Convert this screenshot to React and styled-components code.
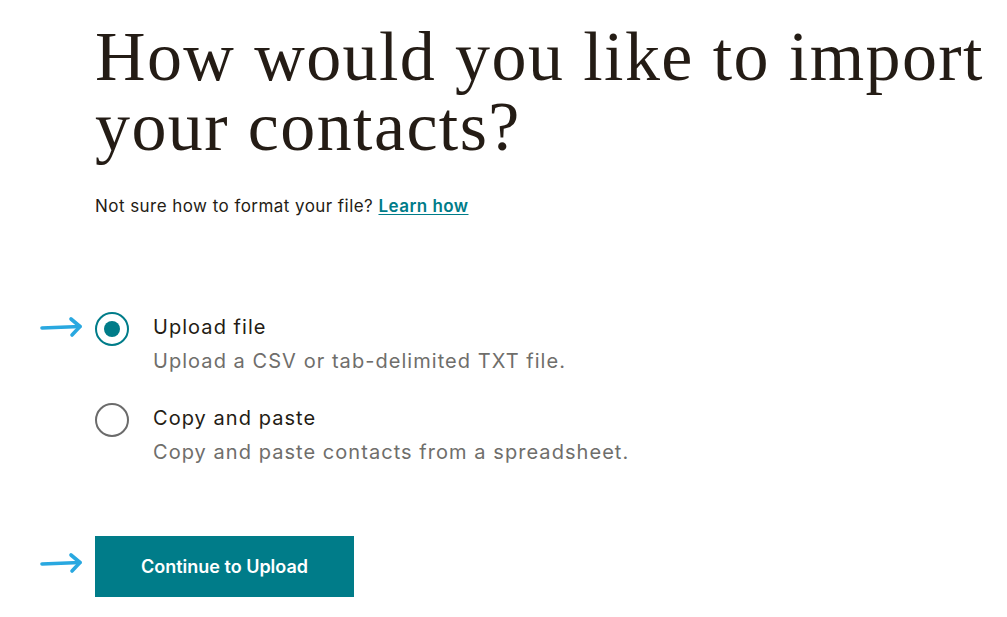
import React, { useState } from 'react';
import styled, { createGlobalStyle } from 'styled-components';

const GlobalStyle = createGlobalStyle`
  html, body {
    margin: 0;
    padding: 0;
    background: #ffffff;
  }
  body {
    font-family: Inter, "Liberation Sans", Arial, sans-serif;
    color: #241c15;
  }
`;

const Page = styled.div`
  width: 1007px;
  height: 617px;
  box-sizing: border-box;
  padding: 22px 0 0 95px;
  overflow: hidden;
`;

const Heading = styled.h1`
  margin: 0;
  font-family: "Liberation Serif", "Times New Roman", serif;
  font-weight: 400;
  font-size: 70px;
  line-height: 70px;
  color: #241c15;
  letter-spacing: 1.4px;
  white-space: nowrap;
`;

const Hint = styled.p`
  margin: 33px 0 0;
  font-size: 17px;
  line-height: 22px;
  letter-spacing: 0.45px;
  color: #241c15;
`;

const Link = styled.a`
  color: #007c89;
  font-weight: 600;
  text-decoration: underline;
  text-underline-offset: 2px;
  cursor: pointer;
`;

const Options = styled.div`
  margin-top: 95px;
  display: flex;
  flex-direction: column;
  gap: 29px;
`;

const Option = styled.label`
  position: relative;
  display: flex;
  align-items: flex-start;
  gap: 24px;
  cursor: pointer;
`;

const Radio = styled.span`
  flex: none;
  width: 34px;
  height: 34px;
  box-sizing: border-box;
  border-radius: 50%;
  border: 2px solid ${p => (p.$checked ? '#007c89' : '#6b6b6b')};
  display: flex;
  align-items: center;
  justify-content: center;
  &::after {
    content: '';
    width: 16px;
    height: 16px;
    border-radius: 50%;
    background: #007c89;
    display: ${p => (p.$checked ? 'block' : 'none')};
  }
`;

const OptionText = styled.div`
  display: flex;
  flex-direction: column;
  gap: 8px;
  padding-top: 2px;
`;

const OptionTitle = styled.span`
  font-size: 20px;
  line-height: 26px;
  letter-spacing: 1.05px;
  color: #241c15;
`;

const OptionDesc = styled.span`
  font-size: 20px;
  line-height: 26px;
  letter-spacing: 1.05px;
  color: #6f6e6b;
`;

const Arrow = styled.svg`
  position: absolute;
  left: -56px;
  top: ${p => p.$top || 8}px;
`;

const ButtonRow = styled.div`
  position: relative;
  margin-top: 71px;
`;

const Button = styled.button`
  width: 259px;
  height: 61px;
  border: none;
  background: #007c89;
  color: #ffffff;
  font-family: Inter, "Liberation Sans", Arial, sans-serif;
  font-size: 18px;
  font-weight: 600;
  letter-spacing: 0;
  cursor: pointer;
`;

const BlueArrow = ({ top }) => (
  <Arrow $top={top} width="46" height="22" viewBox="0 0 46 22" fill="none">
    <path d="M3 12 C15 11.5 28 11 41 10.5" stroke="#29a8e0" strokeWidth="3.6" strokeLinecap="round" />
    <path d="M32 3 L41 10.5 L33 19" stroke="#29a8e0" strokeWidth="3.6" strokeLinecap="round" strokeLinejoin="round" />
  </Arrow>
);

const options = [
  { id: 'upload', title: 'Upload file', desc: 'Upload a CSV or tab-delimited TXT file.' },
  { id: 'paste', title: 'Copy and paste', desc: 'Copy and paste contacts from a spreadsheet.' },
];

export default function App() {
  const [choice, setChoice] = useState('upload');
  return (
    <Page>
      <GlobalStyle />
      <Heading>
        How would you like to import
        <br />
        your contacts?
      </Heading>
      <Hint>
        Not sure how to format your file? <Link>Learn how</Link>
      </Hint>
      <Options>
        {options.map(o => (
          <Option key={o.id} onClick={() => setChoice(o.id)}>
            {o.id === 'upload' && <BlueArrow top={4} />}
            <Radio $checked={choice === o.id} />
            <OptionText>
              <OptionTitle>{o.title}</OptionTitle>
              <OptionDesc>{o.desc}</OptionDesc>
            </OptionText>
          </Option>
        ))}
      </Options>
      <ButtonRow>
        <BlueArrow top={16} />
        <Button>Continue to Upload</Button>
      </ButtonRow>
    </Page>
  );
}
